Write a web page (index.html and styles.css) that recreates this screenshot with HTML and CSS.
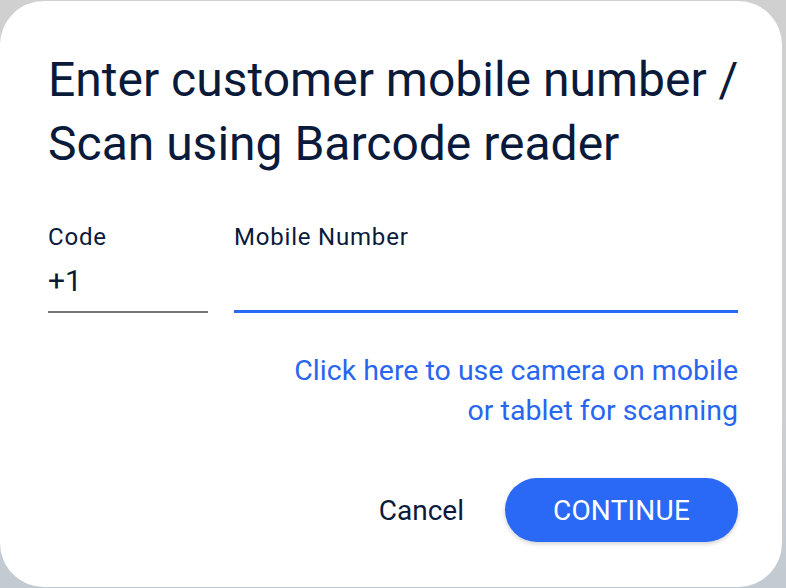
FILE: index.html
```html
<!DOCTYPE html>
<html>
<head>
<meta charset="utf-8">
<link rel="stylesheet" href="styles.css">
</head>
<body>
<div class="dialog">
  <h1 class="title">Enter customer mobile number /<br>Scan using Barcode reader</h1>
  <div class="fields">
    <div class="field field-code">
      <label class="label">Code</label>
      <div class="value">+1</div>
    </div>
    <div class="field field-mobile">
      <label class="label">Mobile Number</label>
      <div class="value"></div>
    </div>
  </div>
  <a class="camera-link">Click here to use camera on mobile<br>or tablet for scanning</a>
  <div class="actions">
    <button class="btn-cancel">Cancel</button>
    <button class="btn-continue">CONTINUE</button>
  </div>
</div>
</body>
</html>
```

FILE: styles.css
```css
html, body {
  margin: 0;
  padding: 0;
}
body {
  width: 786px;
  height: 588px;
  overflow: hidden;
  background: linear-gradient(to bottom, #d0d0d0 0%, #cdcfd1 70%, #c2cad2 100%);
  font-family: Roboto, "Noto Sans", sans-serif;
}
.dialog {
  box-sizing: border-box;
  width: 782px;
  height: 586px;
  margin: 1px 0 0 0;
  background: #fff;
  border-radius: 44px;
  padding: 47px 44px 0 48px;
  display: flex;
  flex-direction: column;
}
.title {
  margin: 0;
  font-size: 48px;
  font-weight: 400;
  line-height: 64px;
  white-space: nowrap;
  color: #0a1a3b;
}
.fields {
  display: flex;
  gap: 26px;
  margin-top: 47px;
}
.field {
  display: flex;
  flex-direction: column;
}
.field-code {
  width: 160px;
  border-bottom: 2px solid #757575;
}
.field-mobile {
  flex: 1;
  border-bottom: 3px solid #2969f5;
}
.label {
  font-size: 24px;
  letter-spacing: 0.8px;
  line-height: 28px;
  color: #0a1a3b;
}
.value {
  font-size: 30px;
  line-height: 36px;
  height: 36px;
  color: #0a1a3b;
  margin-top: 12px;
  margin-bottom: 11px;
}
.camera-link {
  align-self: flex-end;
  text-align: right;
  margin-top: 38px;
  font-size: 28.5px;
  line-height: 40px;
  white-space: nowrap;
  color: #2866f0;
  cursor: pointer;
}
.actions {
  display: flex;
  justify-content: flex-end;
  align-items: center;
  gap: 41px;
  margin-top: 47px;
}
.btn-cancel {
  border: none;
  background: none;
  padding: 0;
  font-family: Roboto, "Noto Sans", sans-serif;
  font-size: 28px;
  color: #0a1a3b;
}
.btn-continue {
  width: 233px;
  height: 64px;
  border: none;
  border-radius: 32px;
  background: #2969f6;
  color: #fff;
  font-family: Roboto, "Noto Sans", sans-serif;
  font-size: 28px;
  letter-spacing: 0.2px;
  box-shadow: 0 2px 4px rgba(0, 0, 0, 0.18);
}
```
